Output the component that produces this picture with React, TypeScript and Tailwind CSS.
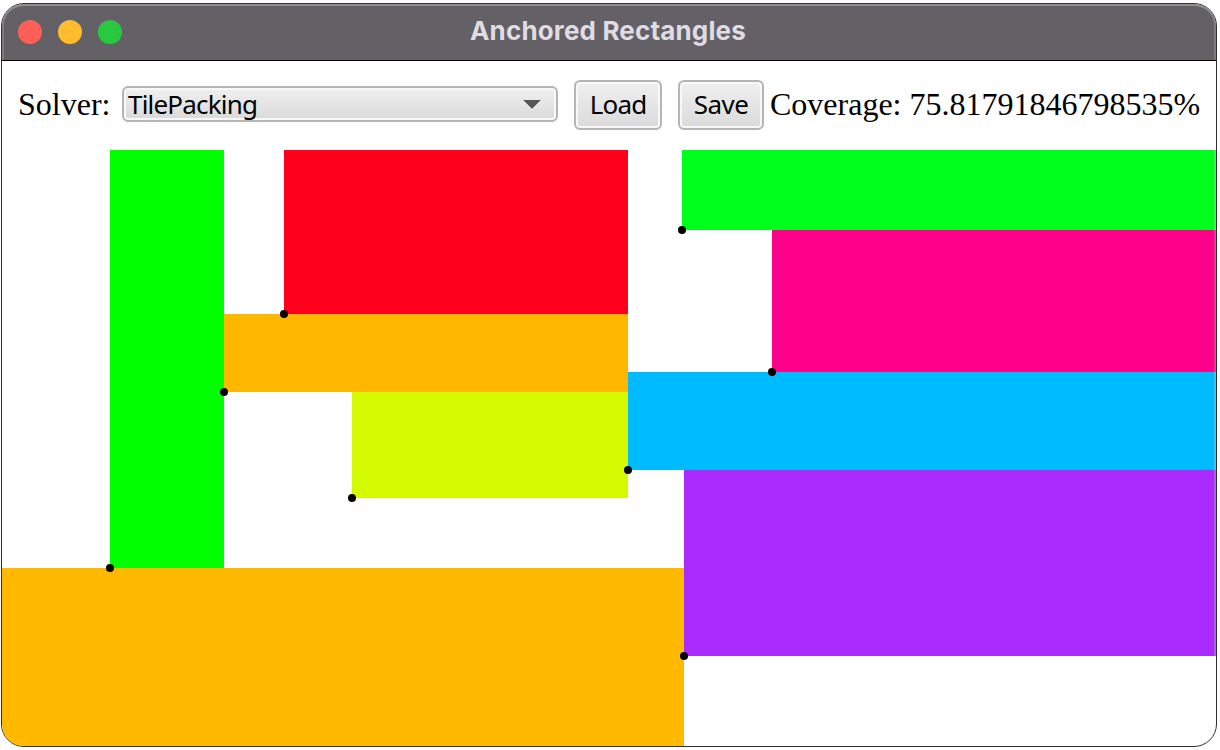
const tiles = [
  { x: 110, y: 150, w: 114, h: 418, fill: "#00ff00" },
  { x: 284, y: 150, w: 344, h: 164, fill: "#ff001c" },
  { x: 224, y: 314, w: 404, h: 78, fill: "#ffb700" },
  { x: 352, y: 392, w: 276, h: 106, fill: "#d4fa00" },
  { x: 682, y: 150, w: 534, h: 80, fill: "#00ff1c" },
  { x: 772, y: 230, w: 444, h: 142, fill: "#ff008a" },
  { x: 628, y: 372, w: 588, h: 98, fill: "#00bbff" },
  { x: 684, y: 470, w: 532, h: 186, fill: "#ab2bff" },
  { x: 2, y: 568, w: 682, h: 178, fill: "#ffba00" },
];

const anchors = tiles.filter((t) => t.x > 2);

function Button({ label, className }: { label: string; className: string }) {
  return (
    <button
      className={`flex h-[50px] shrink-0 items-center justify-center whitespace-nowrap rounded-[6px] border-2 border-[#b5b5b5] bg-gradient-to-b from-[#f0f0f0] to-[#dadada] pb-[2px] shadow-[inset_0_0_0_2px_#f8f8f8] ${className}`}
    >
      {label}
    </button>
  );
}

export default function App() {
  return (
    <div className="h-[750px] w-[1220px] overflow-hidden bg-white pl-px pt-[3px]">
      <div className="relative flex h-[744px] w-[1216px] flex-col overflow-hidden rounded-[23px] border border-[#303034] bg-white">
        <header className="relative flex h-[57px] shrink-0 items-center rounded-t-[22px] border-b border-black bg-[#636066] shadow-[inset_0_2px_0_#8f8f92,inset_2px_0_0_#7d7b80,inset_-2px_0_0_#7d7b80]">
          <div className="flex gap-4 pl-4">
            <span className="size-6 rounded-full bg-[#ff5f57]" />
            <span className="size-6 rounded-full bg-[#febc2e]" />
            <span className="size-6 rounded-full bg-[#28c840]" />
          </div>
          <h1 className="absolute inset-x-0 top-[9px] pr-[2px] text-center font-['Inter',sans-serif] text-[26px] font-bold leading-[36px] tracking-[0.15px] text-[#dfdce2]">
            Anchored Rectangles
          </h1>
        </header>
        <div className="flex h-[89px] shrink-0 items-center pb-[2px] pl-4 font-['Noto_Sans',sans-serif] text-[26px] leading-[32px] tracking-[-0.8px] text-black">
          <span className="mb-[2px] w-[104px] shrink-0 whitespace-nowrap font-['Liberation_Serif',serif] text-[32px] tracking-normal">Solver:</span>
          <div className="mb-[2px] flex h-[36px] w-[436px] shrink-0 items-center justify-between rounded-[6px] border-2 border-[#b5b5b5] bg-gradient-to-b from-[#f0f0f0] to-[#dadada] pl-[4px] pr-[15px] shadow-[inset_0_0_0_2px_#f8f8f8]">
            <span>TilePacking</span>
            <svg className="mt-[2px]" width="18" height="11" viewBox="0 0 18 11">
              <path d="M0 2H18L9 11Z" fill="#fff" />
              <path d="M0 1H18L9 10Z" fill="#575757" />
            </svg>
          </div>
          <Button label="Load" className="ml-4 w-[88px]" />
          <Button label="Save" className="ml-4 w-[86px] tracking-[-0.5px]" />
          <span className="mb-[2px] ml-[6px] whitespace-nowrap font-['Liberation_Serif',serif] text-[32px] tracking-normal">Coverage: 75.81791846798535%</span>
        </div>
        <svg className="block shrink-0" width="1214" height="596" viewBox="2 150 1214 596">
          {tiles.map((t) => (
            <rect key={`${t.x}-${t.y}`} x={t.x} y={t.y} width={t.w} height={t.h} fill={t.fill} />
          ))}
          <path d="M1215 150V656" stroke="#fff" strokeOpacity=".2" strokeWidth="2" />
          {anchors.map((t) => (
            <circle key={`${t.x}-${t.y}`} cx={t.x} cy={t.y + t.h} r="4" />
          ))}
        </svg>
      </div>
    </div>
  );
}
